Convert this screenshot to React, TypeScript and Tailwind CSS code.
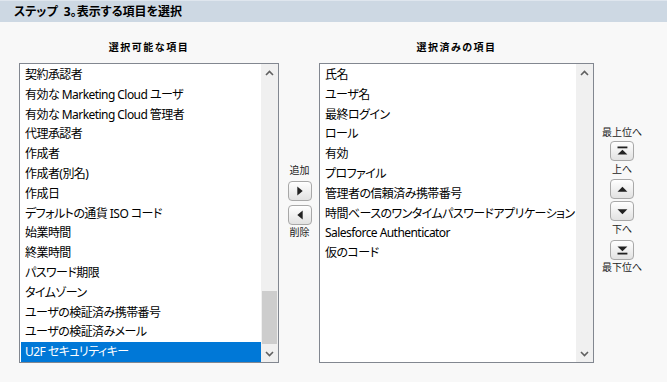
import React from 'react';

const available = [
  '契約承認者',
  '有効な Marketing Cloud ユーザ',
  '有効な Marketing Cloud 管理者',
  '代理承認者',
  '作成者',
  '作成者(別名)',
  '作成日',
  'デフォルトの通貨 ISO コード',
  '始業時間',
  '終業時間',
  'パスワード期限',
  'タイムゾーン',
  'ユーザの検証済み携帯番号',
  'ユーザの検証済みメール',
  'U2F セキュリティキー',
];

const selected = [
  '氏名',
  'ユーザ名',
  '最終ログイン',
  'ロール',
  '有効',
  'プロファイル',
  '管理者の信頼済み携帯番号',
  '時間ベースのワンタイムパスワードアプリケーション',
  'Salesforce Authenticator',
  '仮のコード',
];

function Chevron({ down }: { down?: boolean }) {
  return (
    <svg width="9" height="6" viewBox="0 0 9 6">
      <path
        d={down ? 'M1 1 L4.5 4.5 L8 1' : 'M1 5 L4.5 1.5 L8 5'}
        fill="none"
        stroke="#606060"
        strokeWidth="1.6"
      />
    </svg>
  );
}

function ListBox({
  items,
  active,
  thumb,
}: {
  items: string[];
  active?: number;
  thumb?: boolean;
}) {
  return (
    <div className="flex h-[300px] border border-[#828790] bg-white">
      <div className="flex-1 overflow-hidden p-[1px] pr-0">
        {items.map((item, i) => (
          <div
            key={item}
            className={`h-[19.8px] whitespace-nowrap pl-[4px] text-[12px] leading-[19.8px] tracking-[-0.55px] ${
              i === active ? 'bg-[#0078d7] text-white' : 'text-black'
            }`}
          >
            {item}
          </div>
        ))}
      </div>
      <div className="flex w-[17px] flex-col bg-[#f0f0f0]">
        <div className="flex h-[17px] items-center justify-center">
          <Chevron />
        </div>
        <div className="flex flex-1 flex-col justify-end px-[1px] pb-[1px]">
          {thumb && <div className="h-[53px] bg-[#cdcdcd]" />}
        </div>
        <div className="flex h-[17px] items-center justify-center">
          <Chevron down />
        </div>
      </div>
    </div>
  );
}

function ArrowButton({ kind }: { kind: 'right' | 'left' | 'top' | 'up' | 'down' | 'bottom' }) {
  const icons: Record<string, React.ReactNode> = {
    right: <path d="M8 5 L14 10 L8 15 Z" fill="#222" />,
    left: <path d="M14 5 L8 10 L14 15 Z" fill="#222" />,
    top: (
      <>
        <rect x="6" y="5" width="11" height="2" fill="#222" />
        <path d="M6 14 L11.5 8.5 L17 14 Z" fill="#222" />
      </>
    ),
    up: <path d="M6 13 L11.5 7.5 L17 13 Z" fill="#222" />,
    down: <path d="M6 8 L11.5 13.5 L17 8 Z" fill="#222" />,
    bottom: (
      <>
        <path d="M6 6 L11.5 11.5 L17 6 Z" fill="#222" />
        <rect x="6" y="13" width="11" height="2" fill="#222" />
      </>
    ),
  };
  return (
    <button
      type="button"
      className="flex h-[20px] w-[24px] items-center justify-center rounded-[4px] border border-[#a8a8a8] bg-gradient-to-b from-white to-[#e2e2e2]"
    >
      <svg width="22" height="18" viewBox="0 0 22 20">
        {icons[kind]}
      </svg>
    </button>
  );
}

export default function App() {
  const small = 'h-[12px] text-[10px] leading-[12px] text-[#222] whitespace-nowrap';
  return (
    <div
      className="h-[382px] w-[667px] bg-[#f8f8f8] text-[13px] [font-feature-settings:'palt']"
      style={{ fontFamily: '"Noto Sans", "Noto Sans CJK JP", sans-serif' }}
    >
      <div className="flex h-[22px] items-center border-t border-[#dfe6ee] bg-[#cdd8e3] pl-[14px] text-[12px] font-bold text-black">
        ステップ&nbsp;&nbsp;3。表示する項目を選択
      </div>

      <div className="flex pl-[19px]">
        <div className="w-[260px]">
          <div className="mb-[10px] mt-[19px] h-[12px] text-center text-[10px] font-bold leading-[12px] tracking-[1.5px]">
            選択可能な項目
          </div>
          <ListBox items={available} active={14} thumb />
        </div>

        <div className="flex w-[40px] flex-col items-center pl-[1px] pt-[142px]">
          <div className={small}>追加</div>
          <div className="mt-[5px]">
            <ArrowButton kind="right" />
          </div>
          <div className="mt-[4px]">
            <ArrowButton kind="left" />
          </div>
          <div className={`${small} mt-[1px]`}>削除</div>
        </div>

        <div className="w-[275px]">
          <div className="mb-[10px] mt-[19px] h-[12px] text-center text-[10px] font-bold leading-[12px] tracking-[1.5px]">
            選択済みの項目
          </div>
          <ListBox items={selected} />
        </div>

        <div className="ml-[6px] flex w-[44px] flex-col items-center pt-[104px]">
          <div className={small}>最上位へ</div>
          <div className="mt-[3px]">
            <ArrowButton kind="top" />
          </div>
          <div className={`${small} mt-[2px]`}>上へ</div>
          <div className="mt-[4px]">
            <ArrowButton kind="up" />
          </div>
          <div className="mt-[2px]">
            <ArrowButton kind="down" />
          </div>
          <div className={`${small} mt-[2px]`}>下へ</div>
          <div className="mt-[5px]">
            <ArrowButton kind="bottom" />
          </div>
          <div className={`${small} mt-[1px]`}>最下位へ</div>
        </div>
      </div>
    </div>
  );
}
